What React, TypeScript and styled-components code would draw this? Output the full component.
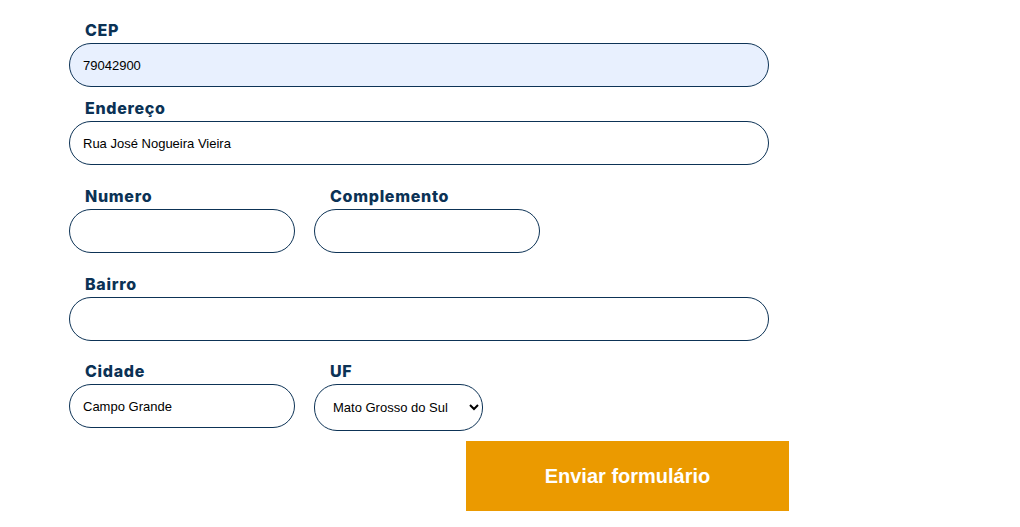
import styled, { createGlobalStyle } from "styled-components";

const GlobalStyle = createGlobalStyle`
  body {
    margin: 0;
    background: #ffffff;
    font-family: "Liberation Sans", Arial, sans-serif;
  }
`;

const Form = styled.form`
  width: 720px;
  margin-left: 69px;
  padding-top: 20px;
  display: flex;
  flex-direction: column;
`;

const Row = styled.div<{ $space: number }>`
  display: flex;
  gap: 19px;
  margin-top: ${(p) => p.$space}px;
`;

const Field = styled.div`
  display: flex;
  flex-direction: column;
`;

const Label = styled.label`
  font-family: Inter, "Open Sans", sans-serif;
  font-weight: 800;
  font-size: 16px;
  letter-spacing: 0.7px;
  line-height: 20px;
  color: #0b3255;
  padding-left: 16px;
  margin-bottom: 3px;
`;

const Input = styled.input<{ $width: number; $filled?: boolean }>`
  box-sizing: border-box;
  width: ${(p) => p.$width}px;
  height: 44px;
  border: 1px solid #0d3356;
  border-radius: 22px;
  padding: 0 13px;
  font-family: "Liberation Sans", Arial, sans-serif;
  font-size: 13px;
  color: #000;
  background: ${(p) => (p.$filled ? "#e8f0fe" : "#fff")};
  outline: none;
`;

const Select = styled.select`
  box-sizing: border-box;
  width: 169px;
  height: 47px;
  border: 1px solid #0d3356;
  border-radius: 23px;
  padding: 0 8px 0 14px;
  font-family: "Liberation Sans", Arial, sans-serif;
  font-size: 13px;
  color: #000;
  background: #fff;
  outline: none;
`;

const Submit = styled.button`
  align-self: flex-end;
  width: 323px;
  height: 70px;
  margin-top: 10px;
  border: none;
  background: #eb9a00;
  color: #fff;
  font-family: "Liberation Sans", Arial, sans-serif;
  font-weight: bold;
  font-size: 20px;
  cursor: pointer;
`;

export default function App() {
  return (
    <>
      <GlobalStyle />
      <Form onSubmit={(e) => e.preventDefault()}>
        <Row $space={0}>
          <Field>
            <Label>CEP</Label>
            <Input $width={700} $filled defaultValue="79042900" />
          </Field>
        </Row>
        <Row $space={11}>
          <Field>
            <Label>Endereço</Label>
            <Input $width={700} defaultValue="Rua José Nogueira Vieira" />
          </Field>
        </Row>
        <Row $space={21}>
          <Field>
            <Label>Numero</Label>
            <Input $width={226} />
          </Field>
          <Field>
            <Label>Complemento</Label>
            <Input $width={226} />
          </Field>
        </Row>
        <Row $space={21}>
          <Field>
            <Label>Bairro</Label>
            <Input $width={700} />
          </Field>
        </Row>
        <Row $space={20}>
          <Field>
            <Label>Cidade</Label>
            <Input $width={226} defaultValue="Campo Grande" />
          </Field>
          <Field>
            <Label>UF</Label>
            <Select defaultValue="MS">
              <option value="MT">Mato Grosso</option>
              <option value="MS">Mato Grosso do Sul</option>
              <option value="SP">São Paulo</option>
            </Select>
          </Field>
        </Row>
        <Submit type="submit">Enviar formulário</Submit>
      </Form>
    </>
  );
}
